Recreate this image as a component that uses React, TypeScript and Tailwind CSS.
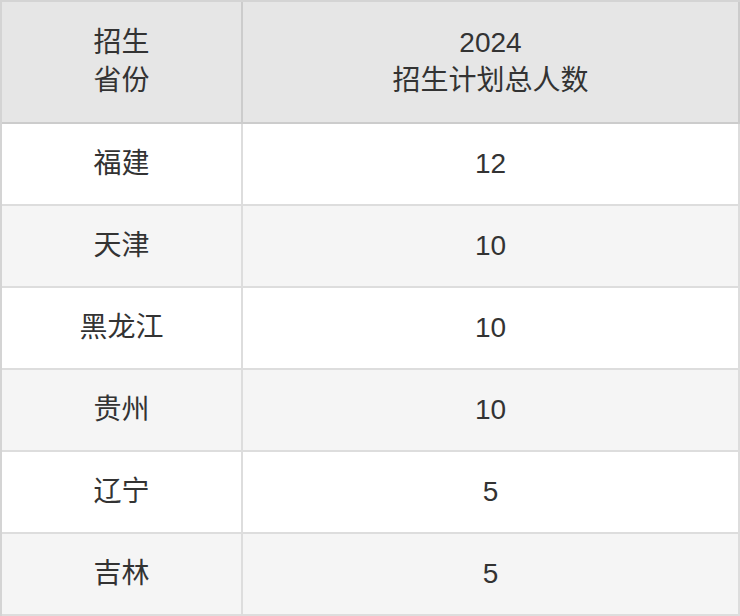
const rows: [string, string][] = [
  ["福建", "12"],
  ["天津", "10"],
  ["黑龙江", "10"],
  ["贵州", "10"],
  ["辽宁", "5"],
  ["吉林", "5"],
];

export default function App() {
  return (
    <div
      className="w-[740px] bg-white text-[#333] text-[28px]"
      style={{ fontFamily: '"Liberation Sans", "Noto Sans CJK SC", sans-serif' }}
    >
      <div className="border-l-2 border-t-2 border-[#d4d4d4]">
        <div className="flex bg-[#e6e6e6]">
          <div className="flex h-[122px] w-[241px] flex-col items-center justify-center border-r-2 border-b-2 border-[#cccccc] leading-[38px]">
            <span>招生</span>
            <span>省份</span>
          </div>
          <div className="flex h-[122px] w-[497px] flex-col items-center justify-center border-r-2 border-b-2 border-[#cccccc] leading-[38px]">
            <span>2024</span>
            <span>招生计划总人数</span>
          </div>
        </div>
        {rows.map(([prov, num], i) => (
          <div key={prov} className={i % 2 === 0 ? "flex bg-white" : "flex bg-[#f5f5f5]"}>
            <div className="flex h-[82px] w-[241px] items-center justify-center border-r-2 border-b-2 border-[#dddddd]">
              {prov}
            </div>
            <div className="flex h-[82px] w-[497px] items-center justify-center border-r-2 border-b-2 border-[#dddddd]">
              {num}
            </div>
          </div>
        ))}
      </div>
    </div>
  );
}
